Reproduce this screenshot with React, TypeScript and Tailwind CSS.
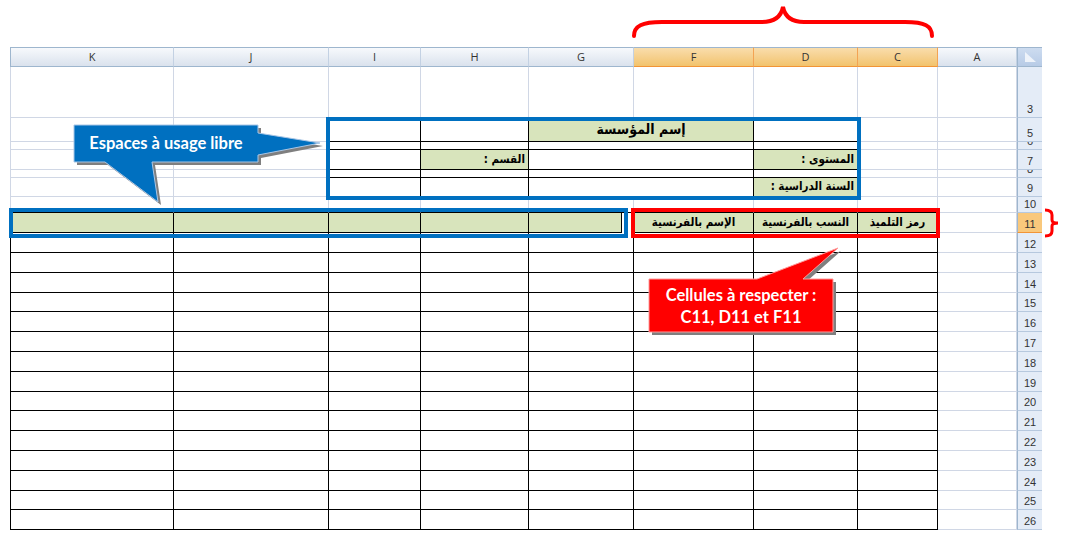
import React from 'react';

type B = 'g' | 'k' | 'n';
const RC: Record<B, string> = { g: 'border-r border-r-[#d0d7e5]', k: 'border-r border-r-black', n: '' };
const BC: Record<B, string> = { g: 'border-b border-b-[#d0d7e5]', k: 'border-b border-b-black', n: '' };
const LC: Record<B, string> = { g: 'border-l border-l-[#d0d7e5]', k: 'border-l border-l-black', n: '' };

const W = {
  K: 'w-[164px]',
  J: 'w-[155px]',
  I: 'w-[92px]',
  H: 'w-[108px]',
  G: 'w-[105px]',
  F: 'w-[120px]',
  D: 'w-[104px]',
  C: 'w-[80px]',
  A: 'w-[79px]',
  GF: 'w-[225px]',
};

interface CellSpec {
  w: string;
  r?: B;
  b?: B;
  l?: B;
  green?: boolean;
  text?: string;
  align?: 'c' | 'r';
  big?: boolean;
  gap?: boolean;
}

function Cell({ s }: { s: CellSpec }) {
  if (s.gap) {
    return (
      <div className={`${s.w} h-full shrink-0 bg-white`}>
        <div className="w-[93px] h-full bg-[#d8e4bc] border-r border-r-black border-b border-b-black" />
      </div>
    );
  }
  return (
    <div
      className={`${s.w} h-full shrink-0 flex items-center overflow-hidden ${RC[s.r ?? 'g']} ${BC[s.b ?? 'g']} ${
        s.l ? LC[s.l] : ''
      } ${s.green ? 'bg-[#d8e4bc]' : 'bg-white'} ${s.align === 'r' ? 'justify-end pr-[3px]' : 'justify-center'}`}
    >
      {s.text && (
        <span
          dir="rtl"
          className={`font-['DejaVu_Sans_Condensed','DejaVu_Sans',sans-serif] font-bold text-black whitespace-nowrap ${
            s.big ? 'text-[14px]' : 'text-[11.5px]'
          }`}
        >
          {s.text}
        </span>
      )}
    </div>
  );
}

function RowHead({ label, sel }: { label: string; sel?: boolean }) {
  return (
    <div
      className={`w-[25px] h-full shrink-0 flex items-end justify-center overflow-hidden border-l border-l-[#9eb6ce] border-b font-['Liberation_Sans',sans-serif] text-[11px] leading-[15px] text-[#333] ${
        sel ? 'bg-[#f9c87c] border-b-[#f29436]' : 'bg-[#e4ecf7] border-b-[#b6c8de]'
      }`}
    >
      {label}
    </div>
  );
}

function Row({ h, label, cells, sel }: { h: string; label: string; cells: CellSpec[]; sel?: boolean }) {
  return (
    <div className={`flex ${h}`}>
      {cells.map((c, i) => (
        <Cell key={i} s={c} />
      ))}
      <RowHead label={label} sel={sel} />
    </div>
  );
}

const gridRow = (): CellSpec[] => [
  { w: W.K, l: 'g' },
  { w: W.J },
  { w: W.I },
  { w: W.H },
  { w: W.G },
  { w: W.F },
  { w: W.D },
  { w: W.C },
  { w: W.A },
];

const thinBoxRow = (): CellSpec[] => [
  { w: W.K, l: 'g' },
  { w: W.J },
  { w: W.I, r: 'k', b: 'k' },
  { w: W.H, r: 'k', b: 'k' },
  { w: W.GF, r: 'k', b: 'k' },
  { w: W.D, r: 'k', b: 'k' },
  { w: W.C },
  { w: W.A },
];

const dataRow = (): CellSpec[] => [
  { w: W.K, l: 'k', r: 'k', b: 'k' },
  { w: W.J, r: 'k', b: 'k' },
  { w: W.I, r: 'k', b: 'k' },
  { w: W.H, r: 'k', b: 'k' },
  { w: W.G, r: 'k', b: 'k' },
  { w: W.F, r: 'k', b: 'k' },
  { w: W.D, r: 'k', b: 'k' },
  { w: W.C, r: 'k', b: 'k' },
  { w: W.A },
];

const headers: { k: string; w: string; sel?: boolean }[] = [
  { k: 'K', w: W.K },
  { k: 'J', w: W.J },
  { k: 'I', w: W.I },
  { k: 'H', w: W.H },
  { k: 'G', w: W.G },
  { k: 'F', w: W.F, sel: true },
  { k: 'D', w: W.D, sel: true },
  { k: 'C', w: W.C, sel: true },
  { k: 'A', w: W.A },
];

const dataHeights = [
  'h-[20px]',
  'h-[20px]',
  'h-[20px]',
  'h-[19px]',
  'h-[20px]',
  'h-[20px]',
  'h-[20px]',
  'h-[20px]',
  'h-[19px]',
  'h-[20px]',
  'h-[20px]',
  'h-[20px]',
  'h-[20px]',
  'h-[19px]',
  'h-[20px]',
];

export default function App() {
  return (
    <div className="relative w-[1070px] h-[539px] overflow-hidden bg-white">
      <div className="pt-[47px] pl-[10px]">
        {/* column header */}
        <div className="flex h-[20px]">
          {headers.map((h, i) => (
            <div
              key={h.k}
              className={`${h.w} h-full shrink-0 flex items-center justify-center border-t border-t-[#9eb6ce] border-b border-r font-['Open_Sans',sans-serif] text-[11px] text-[#333] bg-linear-to-b ${
                i === 0 ? 'border-l border-l-[#9eb6ce]' : ''
              } ${
                h.sel
                  ? 'from-[#f9ddac] to-[#f2c36c] border-b-[#f29436] border-r-[#f3a353]'
                  : 'from-[#f7f9fc] to-[#dae2ed] border-b-[#9eb6ce] border-r-[#c3d1e3]'
              }`}
            >
              {h.k}
            </div>
          ))}
          <div className="w-[25px] h-full shrink-0 border-t border-t-[#9eb6ce] border-l border-l-[#9eb6ce] border-b border-b-[#9eb6ce] bg-linear-to-b from-[#cddcf0] to-[#b7cbe6] flex items-center justify-center">
            <svg width="16" height="14" viewBox="0 0 16 14">
              <polygon points="3,2 14,12 3,12" fill="#eef3fa" />
            </svg>
          </div>
        </div>

        <Row h="h-[51px]" label="3" cells={gridRow()} />
        <Row
          h="h-[24px]"
          label="5"
          cells={[
            { w: W.K, l: 'g' },
            { w: W.J },
            { w: W.I, r: 'k', b: 'k' },
            { w: W.H, r: 'k', b: 'k' },
            { w: W.GF, r: 'k', b: 'k', green: true, text: 'إسم المؤسسة', big: true },
            { w: W.D, r: 'k', b: 'k' },
            { w: W.C },
            { w: W.A },
          ]}
        />
        <Row h="h-[8px]" label="6" cells={thinBoxRow()} />
        <Row
          h="h-[20px]"
          label="7"
          cells={[
            { w: W.K, l: 'g' },
            { w: W.J },
            { w: W.I, r: 'k', b: 'k' },
            { w: W.H, r: 'k', b: 'k', green: true, text: 'القسم :', align: 'r' },
            { w: W.GF, r: 'k', b: 'k' },
            { w: W.D, r: 'k', b: 'k', green: true, text: 'المستوى :', align: 'r' },
            { w: W.C },
            { w: W.A },
          ]}
        />
        <Row h="h-[8px]" label="8" cells={thinBoxRow()} />
        <Row
          h="h-[19px]"
          label="9"
          cells={[
            { w: W.K, l: 'g' },
            { w: W.J },
            { w: W.I, r: 'k', b: 'k' },
            { w: W.H, r: 'k', b: 'k' },
            { w: W.GF, r: 'k', b: 'k' },
            { w: W.D, r: 'k', b: 'k', green: true, text: 'السنة الدراسية :', align: 'r' },
            { w: W.C },
            { w: W.A },
          ]}
        />
        <Row
          h="h-[16px]"
          label="10"
          cells={[
            { w: W.K, l: 'g', b: 'k' },
            { w: W.J, b: 'k' },
            { w: W.I, b: 'k' },
            { w: W.H, b: 'k' },
            { w: W.G, b: 'k' },
            { w: W.F, b: 'k' },
            { w: W.D, b: 'k' },
            { w: W.C, b: 'k' },
            { w: W.A },
          ]}
        />
        <Row
          h="h-[20px]"
          label="11"
          sel
          cells={[
            { w: W.K, l: 'k', r: 'k', b: 'k', green: true },
            { w: W.J, r: 'k', b: 'k', green: true },
            { w: W.I, r: 'k', b: 'k', green: true },
            { w: W.H, r: 'k', b: 'k', green: true },
            { w: W.G, gap: true },
            { w: W.F, r: 'k', b: 'k', green: true, text: 'الإسم بالفرنسية' },
            { w: W.D, r: 'k', b: 'k', green: true, text: 'النسب بالفرنسية' },
            { w: W.C, r: 'k', b: 'k', green: true, text: 'رمز التلميذ' },
            { w: W.A },
          ]}
        />
        {dataHeights.map((h, i) => (
          <Row key={i} h={h} label={String(12 + i)} cells={dataRow()} />
        ))}
      </div>

      {/* highlight boxes */}
      <div className="absolute left-[326px] top-[117px] w-[535px] h-[83px] border-[4px] border-[#0070c0]" />
      <div className="absolute left-[9px] top-[208px] w-[619px] h-[30px] border-[4px] border-[#0070c0]" />
      <div className="absolute left-[631px] top-[208px] w-[309px] h-[30px] border-[4px] border-[#ff0000]" />

      {/* shapes */}
      <svg className="absolute left-0 top-0 pointer-events-none" width="1070" height="539" viewBox="0 0 1070 539">
        <path
          d="M634 36 C634 26 642 22 662 22 L762 22 C774 22 781 17 783 7 C785 17 792 22 804 22 L905 22 C925 22 932 26 932 36"
          fill="none"
          stroke="#ff0000"
          strokeWidth="4"
          strokeLinecap="round"
        />
        <path
          d="M1045 210 Q1052 210 1052 215 L1052 220 Q1052 223 1058 223 Q1052 223 1052 226 L1052 231 Q1052 236 1045 236"
          fill="none"
          stroke="#ff0000"
          strokeWidth="3"
        />
        <g transform="translate(3 3)">
          <path d="M74 125 L258 125 L258 133 L320 143 L258 155 L258 162 L152 162 L158 202 L105 162 L74 162 Z" fill="#7f7f7f" />
        </g>
        <path
          d="M74 125 L258 125 L258 133 L320 143 L258 155 L258 162 L152 162 L158 202 L105 162 L74 162 Z"
          fill="#0070c0"
          stroke="#a9c6e6"
          strokeWidth="1"
        />
        <g transform="translate(3 3)">
          <path d="M649 279 L757 279 L838 248 L803 279 L833 279 L833 332 L649 332 Z" fill="#7f7f7f" />
        </g>
        <path
          d="M649 279 L757 279 L838 248 L803 279 L833 279 L833 332 L649 332 Z"
          fill="#ff0000"
          stroke="#ff9a9a"
          strokeWidth="1"
        />
      </svg>

      <div className="absolute left-[74px] top-[125px] w-[184px] h-[37px] flex items-center justify-center font-['Lato',sans-serif] font-bold text-[16.5px] text-white">
        Espaces à usage libre
      </div>
      <div className="absolute left-[649px] top-[279px] w-[184px] h-[53px] flex flex-col items-center justify-center font-['Lato',sans-serif] font-bold text-[16.5px] leading-[22px] text-white">
        <span>Cellules à respecter :</span>
        <span>C11, D11 et F11</span>
      </div>
    </div>
  );
}
